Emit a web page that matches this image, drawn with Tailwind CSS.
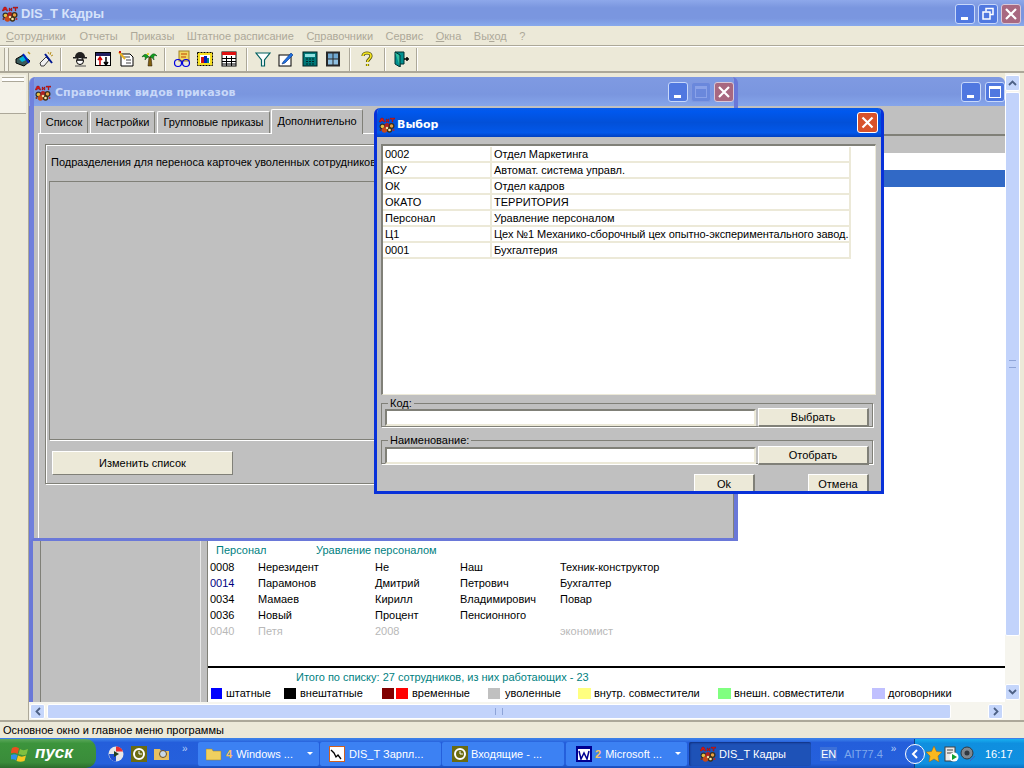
<!DOCTYPE html>
<html lang="ru">
<head>
  <meta charset="UTF-8">
  <title>DIS_T Кадры</title>
  <script src="https://cdn.jsdelivr.net/npm/@tailwindcss/browser@4"></script>
</head>
<body class="m-0 overflow-hidden bg-[#ece9d8]">
<svg class="hidden">
  <symbol id="app" viewBox="0 0 16 16">
    <path d="M0 5 2 1h2l2 4H4.500L4 4H2.500L2 5zM7 2h1v1.200h1V2h1v3H9V4H8v1H7zM11 1h5v1.200h-2V5h-1V2.200h-2z" fill="#d01818" stroke="#701010" stroke-width=".3"/>
    <circle cx="3.500" cy="9.500" r="3" fill="#303030"/><circle cx="3.500" cy="9.500" r="1.800" fill="#e8c040"/>
    <circle cx="8" cy="8.500" r="2.500" fill="#b02020"/><circle cx="12.500" cy="9" r="3" fill="#383020"/><circle cx="12.500" cy="9" r="1.700" fill="#e8a040"/>
    <circle cx="5.500" cy="13" r="2.700" fill="#c84818"/><circle cx="10.500" cy="13" r="2.700" fill="#403010"/><circle cx="10.500" cy="13" r="1.300" fill="#f4e8b0"/>
    <circle cx="8" cy="11" r="1.200" fill="#f0e0a0"/><circle cx="1.500" cy="13" r="1" fill="#803010"/><circle cx="14.500" cy="13" r="1" fill="#c02020"/>
  </symbol>
  <symbol id="clock" viewBox="0 0 16 16">
    <rect width="16" height="16" fill="#6b6b10"/><circle cx="8" cy="8" r="5" fill="none" stroke="#fff" stroke-width="2"/><path d="M8 5v3h3" stroke="#fff" fill="none"/>
  </symbol>
</svg>

<div class="flex h-[768px] w-[1024px] flex-col overflow-hidden font-['Liberation_Sans',sans-serif] text-[11px] leading-[14px] text-black">
  <!-- main title -->
  <div class="flex h-[26px] shrink-0 items-center bg-[linear-gradient(180deg,#8ea8ea_0%,#7a96df_30%,#7a96df_70%,#88a9ec_100%)] pl-[2px] pr-[3px] pt-px">
    <svg class="h-4 w-4"><use href="#app"/></svg>
    <span class="ml-[3px] text-[13px] font-bold text-[#d6e2fa]">DIS_T Кадры</span>
    <div class="ml-auto flex gap-[3px]">
      <div class="flex h-[20px] w-[20px] items-end rounded-[3px] border border-[#c8d8fa] bg-[#5078e0] p-[3px] pl-[5px]"><div class="h-[3px] w-[7px] bg-white"></div></div>
      <div class="h-[20px] w-[20px] rounded-[3px] border border-[#c8d8fa] bg-[#5078e0]">
        <svg viewBox="0 0 18 18" class="h-full w-full" fill="none" stroke="#fff"><path d="M7 6.500V3.500h7v6h-3" stroke-width="1.500"/><rect x="4" y="7" width="7" height="7" stroke-width="1.500"/></svg>
      </div>
      <div class="h-[20px] w-[20px] rounded-[3px] border border-[#d8c8d8] bg-[#a86880]">
        <svg viewBox="0 0 18 18" class="h-full w-full" stroke="#fff" stroke-width="2.200"><path d="m4 4 10 10M14 4 4 14"/></svg>
      </div>
    </div>
  </div>

  <!-- menu -->
  <div class="flex h-[20px] shrink-0 items-center gap-[12.500px] border-b border-[#aca899] pl-[6px] text-[#aca899]">
    <span class="mr-[1.500px]"><u>С</u>отрудники</span><span>Отчеты</span><span>Приказы</span><span>Штатное расписание</span>
    <span>С<u>п</u>равочники</span><span>Се<u>р</u>вис</span><span><u>О</u>кна</span><span>Вы<u>х</u>од</span><span>?</span>
  </div>

  <!-- toolbar -->
  <div class="flex h-[27px] shrink-0 items-center border-t border-white border-b-2 border-b-[#aca899] pl-[4px]">
    <div class="mr-[2px] h-[23px] w-[5px] border-x border-[#aca899] bg-[#f4f2e8]"></div>
    <div class="flex w-[23px] justify-center"><svg viewBox="0 0 16 16" class="h-4 w-4"><path d="M1 8 8 4l7 6-6 5-8-3z" fill="#3a5a5a" stroke="#000"/><path d="M4 8l6-4 3 4-6 3z" fill="#00b8d8"/><path d="M8 3l6 9" stroke="#0020c0" stroke-width="2"/><path d="M13 1l2 2" stroke="#c0a020" stroke-width="1.500"/></svg></div>
    <div class="flex w-[23px] justify-center"><svg viewBox="0 0 16 16" class="h-4 w-4"><path d="M2 12 8 6l3 3-5 6H3z" fill="#f0f0f0" stroke="#404040"/><path d="m7 3 7 9" stroke="#001890" stroke-width="2"/><path d="M10 1l1 2M13 1l-1 3M15 4l-2 1" stroke="#b89020"/></svg></div>
    <div class="ml-[3px] mr-[2px] h-[23px] w-[2px] border-x border-l-[#aca899] border-r-white"></div>
    <div class="ml-[4px] flex w-[23px] justify-center"><svg viewBox="0 0 16 16" class="h-4 w-4"><path d="M3 6a5 5 0 0 1 10 0z" fill="#202020"/><rect x="1" y="6" width="14" height="1.500" fill="#202020"/><circle cx="8" cy="10" r="3.500" fill="#fff" stroke="#000"/><path d="M5 9h6" stroke="#000" stroke-width="1.500"/><path d="M3 15h11" stroke="#505050"/></svg></div>
    <div class="flex w-[23px] justify-center"><svg viewBox="0 0 16 16" class="h-4 w-4"><rect x=".5" y="1.500" width="15" height="13" fill="#fff" stroke="#000"/><rect x="1" y="2" width="14" height="3" fill="#202060"/><path d="M5 14V7M3 9l2-3 2 3" stroke="#d00000" fill="none" stroke-width="1.500"/><path d="M11 6v7M9 11l2 3 2-3" stroke="#000" fill="none" stroke-width="1.500"/></svg></div>
    <div class="flex w-[23px] justify-center"><svg viewBox="0 0 16 16" class="h-4 w-4"><path d="M3 3h9l3 3v9H3z" fill="#fff" stroke="#000"/><path d="M6 6h6M8 9h5M8 12h5" stroke="#404040"/><path d="m1 1 6 7" stroke="#e8b020" stroke-width="2"/><path d="M1 1h2" stroke="#d01010" stroke-width="2"/></svg></div>
    <div class="flex w-[23px] justify-center"><svg viewBox="0 0 16 16" class="h-4 w-4"><path d="M7 15 8 6h2l1 9z" fill="#806010" stroke="#201000" stroke-width=".5"/><path d="M8 6C5 2 3 3 1 6c2-1 4-1 3 3 1-2 3-3 4-3ZM9 6c2-4 5-4 7-1-2-1-4-1-3 4-1-2-3-3-4-3Z" fill="#10a020" stroke="#084010" stroke-width=".5"/><circle cx="7" cy="3" r="1" fill="#e8d000"/></svg></div>
    <div class="ml-[4px] mr-[4px] h-[23px] w-[2px] border-x border-l-[#aca899] border-r-white"></div>
    <div class="flex w-[23px] justify-center"><svg viewBox="0 0 18 18" class="h-[18px] w-[18px]"><rect x="6" y="1" width="10" height="10" fill="#f0d860" stroke="#a08020"/><path d="M8 4h6M8 7h5" stroke="#c04000"/><circle cx="5" cy="13" r="3.500" fill="none" stroke="#0000e0" stroke-width="1.200"/><circle cx="13" cy="13" r="3.500" fill="none" stroke="#0000e0" stroke-width="1.200"/><path d="M8 12h2" stroke="#0000e0"/></svg></div>
    <div class="flex w-[24px] justify-center"><svg viewBox="0 0 16 16" class="h-4 w-4"><rect x=".5" y="1.500" width="15" height="13" fill="#f8e020" stroke="#000" stroke-dasharray="2 1"/><rect x="3" y="4" width="10" height="8" fill="#fff"/><rect x="4" y="6" width="3" height="6" fill="#d01010"/><rect x="7" y="5" width="3" height="7" fill="#0020c0"/><rect x="10" y="7" width="2" height="5" fill="#008080"/></svg></div>
    <div class="flex w-[23px] justify-center"><svg viewBox="0 0 16 16" class="h-4 w-4"><rect x="1" y="1" width="14" height="14" fill="#fff" stroke="#000"/><rect x="1" y="1" width="14" height="3" fill="#e01010"/><path d="M5.500 5v10M10.500 5v10M1 7.500h14M1 10.500h14M1 13h14" stroke="#000"/></svg></div>
    <div class="ml-[6px] mr-[3px] h-[23px] w-[2px] border-x border-l-[#aca899] border-r-white"></div>
    <div class="flex w-[23px] justify-center"><svg viewBox="0 0 16 16" class="h-4 w-4"><path d="M1 2h14L9.500 9v6h-3V9z" fill="#fff" stroke="#006060" stroke-width="1.200"/></svg></div>
    <div class="flex w-[24px] justify-center"><svg viewBox="0 0 16 16" class="h-4 w-4"><rect x="1" y="4" width="12" height="11" fill="#fff" stroke="#000"/><path d="M5 11 13 2l2 2-8 8-3 1z" fill="#2070e0" stroke="#003080" stroke-width=".6"/></svg></div>
    <div class="flex w-[23px] justify-center"><svg viewBox="0 0 16 16" class="h-4 w-4"><rect x="1" y="1" width="14" height="14" fill="#007878" stroke="#002020"/><rect x="3" y="3" width="10" height="3" fill="#90e0e0"/><path d="M4 8h2M7 8h2M10 8h2M4 10.500h2M7 10.500h2M10 10.500h2M4 13h2M7 13h2M10 13h2" stroke="#002828"/></svg></div>
    <div class="flex w-[23px] justify-center"><svg viewBox="0 0 16 16" class="h-4 w-4"><rect x="1" y="0.500" width="14" height="15" fill="#282828"/><rect x="3" y="2.500" width="4.500" height="5" fill="#70a8d0"/><rect x="8.500" y="2.500" width="4.500" height="5" fill="#70a8d0"/><rect x="3" y="8.500" width="4.500" height="5" fill="#90c0e0"/><rect x="8.500" y="8.500" width="4.500" height="5" fill="#90c0e0"/></svg></div>
    <div class="ml-[5px] mr-[4px] h-[23px] w-[2px] border-x border-l-[#aca899] border-r-white"></div>
    <div class="flex w-[23px] justify-center"><svg viewBox="0 0 16 16" class="h-4 w-4"><path d="M4 5C4 1 12 1 12 5c0 3-3.500 3-3.500 6M8.500 13v2" fill="none" stroke="#505010" stroke-width="3.200"/><path d="M4 5C4 1 12 1 12 5c0 3-3.500 3-3.500 6M8.500 13v2" fill="none" stroke="#f8e820" stroke-width="1.600"/></svg></div>
    <div class="ml-[6px] mr-[4px] h-[23px] w-[2px] border-x border-l-[#aca899] border-r-white"></div>
    <div class="flex w-[23px] justify-center"><svg viewBox="0 0 16 16" class="h-4 w-4"><path d="M1 1h9v12H6v3l-5-3z" fill="#009090" stroke="#003030"/><path d="M1 1l5 3v12" fill="#30c0a0" stroke="#003030"/><path d="M10 8h5M13 6v4" stroke="#000" stroke-width="1.500"/></svg></div>
    <div class="ml-[3px] h-[23px] w-[2px] border-x border-l-[#aca899] border-r-white"></div>
  </div>

  <!-- mdi area -->
  <div class="flex min-h-0 flex-1">
    <div class="flex w-[29px] shrink-0 flex-col border-r border-[#aca899]">
      <div class="mt-[2px] h-[39px] w-[26px] border-b border-[#aca899] bg-[#f4f2e8] px-[2px] pt-[2px]"><div class="h-[5px] border-y border-[#aca899] bg-white"></div></div>
    </div>
    <div class="flex min-w-0 flex-1 flex-col">
      <div class="flex min-h-0 flex-1">
        <div class="relative min-w-0 flex-1 bg-[#ece9d8] pt-[4px]">
          <!-- window behind -->
          <div class="flex h-full flex-col">
            <div class="flex h-[29px] shrink-0 items-center justify-end gap-[4px] rounded-t-[6px] bg-[linear-gradient(180deg,#7f9ae2_0%,#7a96df_60%,#86a5ea_100%)]">
              <div class="flex h-[20px] w-[20px] items-end rounded-[3px] border border-[#c8d8fa] bg-[#5078e0] p-[3px] pl-[5px]"><div class="h-[3px] w-[7px] bg-white"></div></div>
              <div class="h-[20px] w-[20px] rounded-[3px] border border-[#c8d8fa] bg-[#5078e0] p-[3px]"><div class="h-full border border-t-[3px] border-white"></div></div>
            </div>
            <div class="flex min-h-0 flex-1 border-l-4 border-[#6a78d8] bg-[#c0c0c0]">
              <div class="w-[175px] shrink-0 border-r border-[#808078] pl-[7px] pr-[6px]"><div class="h-full border-x border-[#808078] border-r-[#e8e8e8]"></div></div>
              <div class="flex min-w-0 flex-1 flex-col">
                <div class="h-[30px] shrink-0 border-b-2 border-[#808078]"></div>
                <div class="h-[17px] shrink-0"></div>
                <div class="flex min-h-0 flex-1 flex-col bg-white">
                  <div class="mt-[17px] h-[17px] shrink-0 bg-[#3169c6]"></div>
                  <div class="mt-[351px] h-[2px] w-[47px] shrink-0 bg-[#40e0a0]"></div>
                  <div class="mt-[3px] flex h-[14px] shrink-0 pl-[8px] text-[#007f7f]"><span class="w-[100px]">Персонал</span><span>Уравление персоналом</span></div>
                  <div class="mt-[3px] grid shrink-0 grid-cols-[48px_117px_85px_100px_1fr] pl-[2px] [&>span]:h-[16px]">
                    <span>0008</span><span>Нерезидент</span><span>Не</span><span>Наш</span><span>Техник-конструктор</span>
                    <span class="text-[#000080]">0014</span><span>Парамонов</span><span>Дмитрий</span><span>Петрович</span><span>Бухгалтер</span>
                    <span>0034</span><span>Мамаев</span><span>Кирилл</span><span>Владимирович</span><span>Повар</span>
                    <span>0036</span><span>Новый</span><span>Процент</span><span>Пенсионного</span><span></span>
                    <span class="text-[#b8b8b8]">0040</span><span class="text-[#b8b8b8]">Петя</span><span class="text-[#b8b8b8]">2008</span><span></span><span class="text-[#b8b8b8]">экономист</span>
                  </div>
                  <div class="mt-[26px] h-[2px] shrink-0 bg-black"></div>
                  <div class="mt-[2px] shrink-0 pl-[88px] text-[#007f7f]">Итого по списку: 27 сотрудников, из них работающих - 23</div>
                  <div class="mt-[2px] flex shrink-0 items-center pl-[3px]">
                    <div class="flex w-[73px] items-center gap-[4px]"><div class="h-[11px] w-[11px] bg-[#0000ff]"></div>штатные</div>
                    <div class="flex w-[98px] items-center gap-[4px]"><div class="h-[11px] w-[12px] bg-black"></div>внештатные</div>
                    <div class="flex w-[106px] items-center gap-[4px]"><div class="h-[11px] w-[12px] bg-[#800000]"></div><div class="-ml-[2px] h-[11px] w-[12px] bg-[#ff0000]"></div>временные</div>
                    <div class="flex w-[90px] items-center gap-[5px]"><div class="h-[11px] w-[12px] bg-[#c0c0c0]"></div>уволенные</div>
                    <div class="flex w-[140px] items-center gap-[3px]"><div class="h-[11px] w-[13px] bg-[#ffff80]"></div>внутр. совместители</div>
                    <div class="flex w-[154px] items-center gap-[3px]"><div class="h-[11px] w-[13px] bg-[#80ff80]"></div>внешн. совместители</div>
                    <div class="flex items-center gap-[3px]"><div class="h-[11px] w-[13px] bg-[#c0c0ff]"></div>договорники</div>
                  </div>
                </div>
              </div>
            </div>
          </div>

          <!-- справочник видов приказов -->
          <div class="absolute left-[1px] top-[4px] flex h-[464px] w-[708px] flex-col overflow-hidden rounded-t-[6px] border-x-4 border-b-[3px] border-[#6a78d8] border-l-[#7080dc] bg-[#c0c0c0]">
            <div class="-mx-[4px] flex h-[29px] shrink-0 items-center bg-[linear-gradient(180deg,#7f9ae2_0%,#7a96df_60%,#86a5ea_100%)] pl-[5px] pr-[4px]">
              <svg class="mt-[2px] h-4 w-4"><use href="#app"/></svg>
              <span class="ml-[4px] mt-[2px] font-['DejaVu_Sans',sans-serif] text-[11px] font-bold text-[#c8d8f8]">Справочник видов приказов</span>
              <div class="ml-auto flex gap-[3px]">
                <div class="flex h-[20px] w-[20px] items-end rounded-[3px] border border-[#c8d8fa] bg-[#5078e0] p-[3px] pl-[5px]"><div class="h-[3px] w-[7px] bg-white"></div></div>
                <div class="h-[20px] w-[20px] rounded-[3px] border border-[#8098e0] bg-[#6a88dc] p-[3px]"><div class="h-full border border-t-[3px] border-[#8aa2e8]"></div></div>
                <div class="h-[20px] w-[20px] rounded-[3px] border border-[#d8c8d8] bg-[#a86880]">
                  <svg viewBox="0 0 18 18" class="h-full w-full" stroke="#fff" stroke-width="2.200"><path d="m4 4 10 10M14 4 4 14"/></svg>
                </div>
              </div>
            </div>
            <div class="flex min-h-0 flex-1 flex-col pl-[4px]">
              <div class="relative z-10 flex h-[27px] shrink-0 items-end pl-[2px]">
                <div class="mr-[2px] flex h-[22px] w-[48px] items-center justify-center rounded-t-[2px] border-x border-t border-white border-r-[#808078] pb-[2px]">Список</div>
                <div class="mr-[2px] flex h-[22px] w-[65px] items-center justify-center rounded-t-[2px] border-x border-t border-white border-r-[#808078] pb-[2px]">Настройки</div>
                <div class="mr-px flex h-[22px] w-[113px] items-center justify-center rounded-t-[2px] border-x border-t border-white border-r-[#808078] pb-[2px]">Групповые приказы</div>
                <div class="-mb-px flex h-[25px] w-[92px] items-center justify-center rounded-t-[2px] border-x border-t border-white border-r-[#808078] bg-[#c0c0c0] pb-[2px]">Дополнительно</div>
              </div>
              <div class="flex min-h-0 flex-1 flex-col border-x border-t border-white border-r-[#808078] pl-[6px] pt-[10px]">
                <div class="mr-[2px] flex h-[340px] shrink-0 flex-col border border-[#808078] px-[3px] shadow-[inset_1px_1px_0_#fff,1px_1px_0_#fff]">
                  <div class="flex h-[36px] shrink-0 items-center pl-[2px] pb-[3px]">Подразделения для переноса карточек уволенных сотрудников</div>
                  <div class="h-[259px] shrink-0 border border-[#808078] shadow-[1px_1px_0_#fff]"></div>
                  <div class="ml-[3px] mt-[11px] flex h-[24px] w-[181px] shrink-0 items-center justify-center border border-t-white border-l-white border-r-[#808078] border-b-[#808078] bg-[#ece9d8]">Изменить список</div>
                </div>
              </div>
            </div>
          </div>

          <!-- выбор -->
          <div class="absolute left-[345px] top-[35px] flex h-[386px] w-[510px] flex-col overflow-hidden rounded-t-[6px] border-x-[3px] border-b-[3px] border-[#0831d9] bg-[#c0c0c0]">
            <div class="-mx-[3px] flex h-[29px] shrink-0 items-center bg-[linear-gradient(180deg,#0a5ae6_0%,#0058ee_12%,#0250d8_50%,#0258ea_85%,#0040c0_100%)] pl-[5px] pr-[6px]">
              <svg class="mt-[4px] h-4 w-4"><use href="#app"/></svg>
              <span class="ml-[2px] mt-[4px] font-['DejaVu_Sans',sans-serif] text-[11px] font-bold text-white">Выбор</span>
              <div class="ml-auto h-[21px] w-[21px] rounded-[3px] border border-white bg-[#d8522a]">
                <svg viewBox="0 0 19 19" class="h-full w-full" stroke="#fff" stroke-width="2.200"><path d="m4.500 4.500 10 10M14.500 4.500l-10 10"/></svg>
              </div>
            </div>
            <div class="flex min-h-0 flex-1 flex-col px-[4px] pt-[7px]">
              <div class="h-[251px] w-[495px] shrink-0 border border-t-2 border-l-2 border-[#808078] border-r-[#ece9d8] border-b-[#ece9d8] bg-white pt-px">
                <div class="grid w-[468px] grid-cols-[109px_1fr] [&>div]:h-[16px] [&>div]:overflow-hidden [&>div]:whitespace-nowrap [&>div]:border-b-2 [&>div]:border-r-2 [&>div]:border-[#ece9d8] [&>div]:pl-[2px] [&>div]:leading-[14px]">
                  <div>0002</div><div>Отдел Маркетинга</div>
                  <div>АСУ</div><div>Автомат. система управл.</div>
                  <div>ОК</div><div>Отдел кадров</div>
                  <div>ОКАТО</div><div>ТЕРРИТОРИЯ</div>
                  <div>Персонал</div><div>Уравление персоналом</div>
                  <div>Ц1</div><div class="tracking-[-0.06px]">Цех №1 Механико-сборочный цех опытно-экспериментального завод.</div>
                  <div>0001</div><div>Бухгалтерия</div>
                </div>
              </div>
              <fieldset class="mt-[3px] flex h-[29px] w-[492px] shrink-0 border border-[#808078] shadow-[1px_1px_0_#fff] pl-[3px]">
                <legend class="ml-[3px] px-[2px] text-[11px] leading-[10px]">Код:</legend>
                <div class="mt-px h-[17px] w-[371px] shrink-0 border-2 border-[#808078] border-r-[#ece9d8] border-b-[#ece9d8] bg-white"></div>
                <div class="ml-[2px] flex h-[19px] w-[111px] items-center justify-center border border-t-white border-l-white border-r-2 border-b-2 border-r-[#808078] border-b-[#808078] bg-[#ece9d8]">Выбрать</div>
              </fieldset>
              <fieldset class="mt-[8px] flex h-[29px] w-[492px] shrink-0 border border-[#808078] shadow-[1px_1px_0_#fff] pl-[3px]">
                <legend class="ml-[3px] px-[2px] text-[11px] leading-[10px]">Наименование:</legend>
                <div class="mt-[2px] h-[17px] w-[371px] shrink-0 border-2 border-[#808078] border-r-[#ece9d8] border-b-[#ece9d8] bg-white"></div>
                <div class="ml-[2px] mt-px flex h-[19px] w-[111px] items-center justify-center border border-t-white border-l-white border-r-2 border-b-2 border-r-[#808078] border-b-[#808078] bg-[#ece9d8]">Отобрать</div>
              </fieldset>
              <div class="mt-[10px] flex shrink-0 pl-[313px]">
                <div class="flex h-[20px] w-[61px] items-center justify-center border border-t-white border-l-white border-r-2 border-r-[#808078] bg-[#ece9d8]">Ok</div>
                <div class="ml-[53px] flex h-[20px] w-[61px] items-center justify-center border border-t-white border-l-white border-r-2 border-r-[#808078] bg-[#ece9d8]">Отмена</div>
              </div>
            </div>
          </div>
        </div>
        <!-- vertical scroll -->
        <div class="flex w-[15px] shrink-0 flex-col bg-[#f6f5ee] pt-[2px]">
          <div class="flex h-[16px] items-center justify-center rounded-[2px] border border-white bg-[#c5d6fb]"><svg viewBox="0 0 9 6" class="w-[9px]" fill="none" stroke="#4d6185" stroke-width="1.800"><path d="m1 5 3.500-3.500L8 5"/></svg></div>
          <div class="mt-[1px] flex h-[544px] items-center justify-center rounded-[2px] border border-white bg-[#c2d3fb]"><div class="h-[8px] w-[7px] border-y border-[#8ea4d8]"></div></div>
          <div class="mt-auto mb-[2px] flex h-[16px] items-center justify-center rounded-[2px] border border-white bg-[#c5d6fb]"><svg viewBox="0 0 9 6" class="w-[9px]" fill="none" stroke="#4d6185" stroke-width="1.800"><path d="m1 1 3.500 3.500L8 1"/></svg></div>
        </div>
      </div>
      <!-- horizontal scroll -->
      <div class="flex h-[18px] shrink-0 items-center bg-[#f6f5ee] pl-[1px] pr-[17px]">
        <div class="flex h-[15px] w-[15px] items-center justify-center rounded-[2px] border border-white bg-[#c5d6fb]"><svg viewBox="0 0 6 9" class="h-[9px]" fill="none" stroke="#4d6185" stroke-width="1.800"><path d="M5 1 1.500 4.500 5 8"/></svg></div>
        <div class="ml-[2px] flex h-[15px] w-[904px] items-center justify-center rounded-[2px] border border-white bg-[#c2d3fb]"><div class="h-[7px] w-[8px] border-x border-[#8ea4d8]"></div></div>
        <div class="ml-auto flex h-[15px] w-[15px] items-center justify-center rounded-[2px] border border-white bg-[#c5d6fb]"><svg viewBox="0 0 6 9" class="h-[9px]" fill="none" stroke="#4d6185" stroke-width="1.800"><path d="M1 1 4.500 4.500 1 8"/></svg></div>
      </div>
    </div>
    <div class="w-[4px] shrink-0"></div>
  </div>

  <!-- status bar -->
  <div class="flex h-[18px] shrink-0 items-center border-t-2 border-[#aca899] pl-[3px]">Основное окно и главное меню программы</div>

  <!-- taskbar -->
  <div class="flex h-[30px] shrink-0 items-center border-t border-[#3a80e8] bg-[linear-gradient(180deg,#3c80ea_0%,#245edb_12%,#2560dc_85%,#1a4cb8_100%)] text-white">
    <div class="flex h-full w-[96px] shrink-0 items-center rounded-r-[10px] bg-[linear-gradient(180deg,#5ca85c_0%,#3c943c_15%,#3a8c3a_80%,#2c6c2c_100%)] pl-[11px]">
      <svg viewBox="0 0 18 18" class="h-[18px] w-[18px]"><path d="M1 3c3-1.500 5-1 7 .5L6.500 9c-2-1.500-4-1.500-7-.5z" fill="#e85020"/><path d="M9 4c2 1.500 5 1.500 8 0l-1.500 5.500c-3 1-5 1-8-.5z" fill="#80c040"/><path d="M0 10c3-1 4-1 6.500 0L5 15.500c-2-1.500-4-1.500-7-.5z" fill="#3090e8"/><path d="M7 10.500c2.500 1.500 5 1.500 8 0L13.500 16c-3 1-5 1-8 0z" fill="#f8c820"/></svg>
      <span class="ml-[6px] -mt-[2px] text-[17px] font-bold italic">пуск</span>
    </div>
    <div class="ml-[12px] flex w-[90px] shrink-0 items-center gap-[7px]">
      <svg viewBox="0 0 16 16" class="h-4 w-4"><circle cx="8" cy="8" r="7.500" fill="#e8e8e8"/><path d="M8 .5a7.500 7.500 0 0 1 7 5H8z" fill="#e83030"/><path d="M1 8a7.500 7.500 0 0 0 7 7.500V8z" fill="#2050d0"/><path d="M6 5l5 3-5 3z" fill="#204020"/></svg>
      <svg class="h-4 w-4"><use href="#clock"/></svg>
      <svg viewBox="0 0 16 16" class="h-4 w-4"><path d="M0 3h6l1 2h8v9H0z" fill="#e8c060"/><circle cx="9" cy="8" r="3.500" fill="#c8d8e8" stroke="#705020"/></svg>
      <span class="relative -top-[5px] ml-[5px] text-[10px] leading-none text-[#b8d0f8]">»</span>
    </div>
    <div class="flex h-[24px] w-[121px] shrink-0 items-center rounded-[2px] bg-[#3c81f3] pl-[8px] pr-[4px]">
      <svg viewBox="0 0 16 16" class="h-4 w-4"><path d="M0 3h6l1 2h8v9H0z" fill="#f0d060" stroke="#a08020" stroke-width=".5"/></svg>
      <span class="ml-[4px] font-bold text-[#f8c060]">4</span><span class="ml-[4px] truncate">Windows ...</span>
      <span class="ml-auto mr-[2px] h-0 w-0 border-x-[3px] border-t-[3px] border-x-transparent border-t-white"></span>
    </div>
    <div class="ml-px flex h-[24px] w-[121px] shrink-0 items-center rounded-[2px] bg-[#3c81f3] pl-[9px]">
      <svg viewBox="0 0 16 16" class="h-4 w-4"><rect x=".5" y=".5" width="15" height="15" fill="#fff" stroke="#d06020"/><path d="M2 4l3 3 2 4 2-2 3 4" fill="none" stroke="#000" stroke-width="1.300"/></svg>
      <span class="ml-[4px]">DIS_T Зарпл...</span>
    </div>
    <div class="ml-px flex h-[24px] w-[122px] shrink-0 items-center rounded-[2px] bg-[#3c81f3] pl-[10px]">
      <svg class="h-4 w-4"><use href="#clock"/></svg>
      <span class="ml-[3px]">Входящие - ...</span>
    </div>
    <div class="ml-[2px] flex h-[24px] w-[121px] shrink-0 items-center rounded-[2px] bg-[#3c81f3] pl-[10px] pr-[4px]">
      <svg viewBox="0 0 16 16" class="h-4 w-4"><rect width="16" height="16" fill="#000090"/><rect x="2" y="3" width="12" height="11" fill="#fff"/><path d="M3 5l2 8 3-6 3 6 2-8" fill="none" stroke="#000090" stroke-width="1.500"/></svg>
      <span class="ml-[3px] font-bold text-[#f8c060]">2</span><span class="ml-[4px]">Microsoft ...</span>
      <span class="ml-auto mr-[2px] h-0 w-0 border-x-[3px] border-t-[3px] border-x-transparent border-t-white"></span>
    </div>
    <div class="ml-[2px] flex h-[24px] w-[122px] shrink-0 items-center rounded-[2px] bg-[#1e52b7] pl-[11px] shadow-[inset_1px_1px_2px_#103080]">
      <svg class="h-4 w-4"><use href="#app"/></svg>
      <span class="ml-[3px]">DIS_T Кадры</span>
    </div>
    <span class="ml-[9px] bg-[#3c70d8] px-px">EN</span>
    <span class="ml-[7px] text-[#7fa8ec]">AIT77.4</span>
    <span class="relative -top-[5px] ml-[8px] text-[10px] leading-none text-[#b8d0f8]">»</span>
    <div class="ml-auto flex h-full w-[110px] shrink-0 items-center border-l border-[#104080] bg-[linear-gradient(180deg,#18b0f0_0%,#0f8fdf_15%,#1090e0_85%,#0a70c0_100%)]">
      <div class="-ml-[10px] flex h-[20px] w-[20px] shrink-0 items-center justify-center rounded-full border border-white bg-[#2a6ce0]"><svg viewBox="0 0 8 10" class="h-[10px]" fill="none" stroke="#fff" stroke-width="2"><path d="M6 1 2 5l4 4"/></svg></div>
      <svg viewBox="0 0 16 16" class="ml-[1px] h-4 w-4"><path d="m8 0 2.500 5.500 5.500.5-4 4 1 6-5-3-5 3 1-6-4-4 5.500-.5z" fill="#f8b820" stroke="#a06010" stroke-width=".5"/></svg>
      <svg viewBox="0 0 16 16" class="ml-[1px] h-4 w-4"><rect x="2" y="1" width="10" height="14" fill="#e8e8e8" stroke="#404040"/><path d="M4 4h6M4 7h6" stroke="#404040"/><circle cx="11" cy="11" r="4.500" fill="#fff"/><path d="m9 8 5 3-5 3z" fill="#10a030"/></svg>
      <svg viewBox="0 0 16 16" class="ml-[1px] h-4 w-4"><circle cx="7" cy="7" r="6" fill="#808890" stroke="#303840"/><circle cx="7" cy="7" r="2.500" fill="#303840"/><path d="m10 15 5-5" stroke="#4060c0"/></svg>
      <span class="ml-[9px]">16:17</span>
    </div>
  </div>
</div>
</body>
</html>
